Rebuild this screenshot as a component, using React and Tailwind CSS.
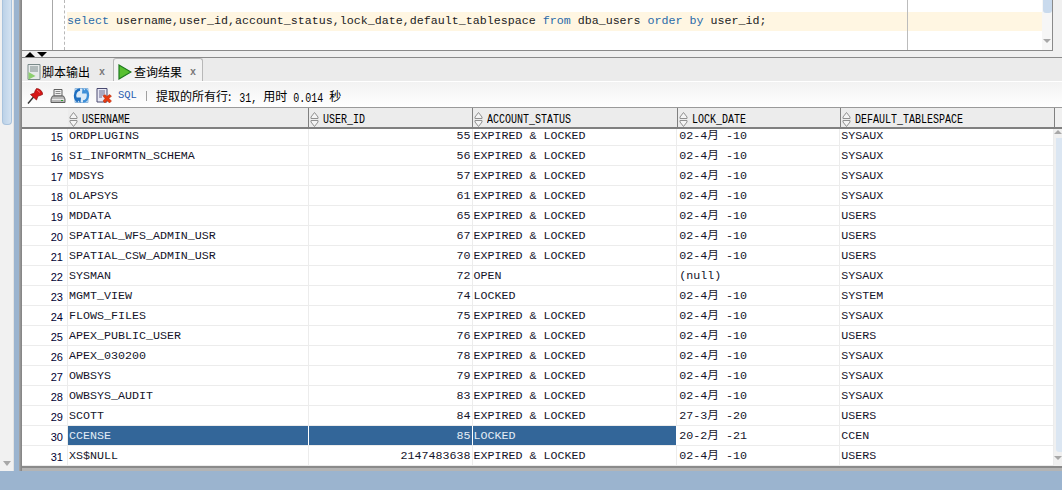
const EL = 'EXPIRED & LOCKED';

const rows = [
  [15, 'ORDPLUGINS', '55', EL, '02-4月 -10', 'SYSAUX'],
  [16, 'SI_INFORMTN_SCHEMA', '56', EL, '02-4月 -10', 'SYSAUX'],
  [17, 'MDSYS', '57', EL, '02-4月 -10', 'SYSAUX'],
  [18, 'OLAPSYS', '61', EL, '02-4月 -10', 'SYSAUX'],
  [19, 'MDDATA', '65', EL, '02-4月 -10', 'USERS'],
  [20, 'SPATIAL_WFS_ADMIN_USR', '67', EL, '02-4月 -10', 'USERS'],
  [21, 'SPATIAL_CSW_ADMIN_USR', '70', EL, '02-4月 -10', 'USERS'],
  [22, 'SYSMAN', '72', 'OPEN', '(null)', 'SYSAUX'],
  [23, 'MGMT_VIEW', '74', 'LOCKED', '02-4月 -10', 'SYSTEM'],
  [24, 'FLOWS_FILES', '75', EL, '02-4月 -10', 'SYSAUX'],
  [25, 'APEX_PUBLIC_USER', '76', EL, '02-4月 -10', 'USERS'],
  [26, 'APEX_030200', '78', EL, '02-4月 -10', 'SYSAUX'],
  [27, 'OWBSYS', '79', EL, '02-4月 -10', 'SYSAUX'],
  [28, 'OWBSYS_AUDIT', '83', EL, '02-4月 -10', 'SYSAUX'],
  [29, 'SCOTT', '84', EL, '27-3月 -20', 'USERS'],
  [30, 'CCENSE', '85', 'LOCKED', '20-2月 -21', 'CCEN'],
  [31, 'XS$NULL', '2147483638', EL, '02-4月 -10', 'USERS'],
];

const mono = "font-['Liberation_Mono','Noto_Sans_CJK_SC',monospace]";
const cjk = "font-['Noto_Sans_CJK_SC','Liberation_Sans',sans-serif]";

const SortIcon = () => (
  <svg width="9" height="15" viewBox="0 0 9 15" className="shrink-0">
    <path d="M4.5 0.5 L8 5 V6.5 H1 V5 Z M4.5 14.5 L8 10 V8.5 H1 V10 Z" fill="#f4f4f4" stroke="#909090" />
  </svg>
);

const PinIcon = () => (
  <svg width="16" height="16" viewBox="0 0 16 16">
    <path d="M1 15.5 L6.5 9" stroke="#333" strokeWidth="1.4" />
    <path d="M9.5 0.5 Q12 0.5 14 2.5 Q15.8 4.5 15.5 6.5 L13 7.5 L11 8 L9.5 12 L3.5 6.5 L7.5 5 L8 3 Z" fill="#d81818" stroke="#8c0c0c" strokeWidth="0.7" />
    <path d="M10 2 L13 4.5" stroke="#f07070" strokeWidth="1" />
  </svg>
);

const PrinterIcon = () => (
  <svg width="16" height="16" viewBox="0 0 16 16">
    <path d="M4 1.5 H12 V8 H4 Z" fill="#f0f0f0" stroke="#606060" />
    <path d="M5.5 3.5 H10.5 M5.5 5.5 H10.5" stroke="#8a8a8a" />
    <path d="M2.5 8 H13.5 L15 11 V14.5 H1 V11 Z" fill="#b8b8b8" stroke="#606060" />
    <path d="M2 11.5 H14" stroke="#e8e8e8" />
    <rect x="11" y="12" width="2" height="1" fill="#28a028" />
  </svg>
);

const RefreshIcon = () => (
  <svg width="17" height="17" viewBox="0 0 17 17">
    <path d="M2 1.5 H15 V15.5 H2 Z" fill="#dcebf8" stroke="#8fb8de" />
    <path d="M7 2.5 Q2.5 3 2 8.5 Q2 12.5 5 14.5" fill="none" stroke="#1f6fc0" strokeWidth="2.4" />
    <path d="M2.5 10.5 L8 10.5 L7.5 16 Z" fill="#1f6fc0" />
    <path d="M10 14.5 Q14.5 14 15 8.5 Q15 4.5 12 2.5" fill="none" stroke="#3d8fd8" strokeWidth="2.4" />
    <path d="M14.5 6.5 L9 6.5 L9.5 1 Z" fill="#3d8fd8" />
  </svg>
);

const ClearIcon = () => (
  <svg width="16" height="16" viewBox="0 0 16 16">
    <path d="M1 0.5 H11 V14 H1 Z" fill="#e8e8f4" stroke="#4a4a70" />
    <path d="M3 3 H9 M3 5 H9 M3 7 H8 M3 9 H6" stroke="#6a6a90" />
    <path d="M7 8 L9 6.5 L11 8.5 L13.5 6.5 L15.5 8 L13 10.5 L15.5 13 L13.5 15 L11 12.5 L9 15 L7 13 L9 10.5 Z" fill="#e83a10" stroke="#b02808" strokeWidth="0.5" />
  </svg>
);

const PlayIcon = () => (
  <svg width="14" height="16" viewBox="0 0 14 16">
    <path d="M1 1 L13 8 L1 15 Z" fill="#58c030" stroke="#1e7a1e" strokeWidth="1.2" />
  </svg>
);

const ScriptIcon = () => (
  <svg width="14" height="16" viewBox="0 0 14 16">
    <path d="M1 0.5 H13 V15.5 H1 Z" fill="#e6eaea" stroke="#7a8a8a" />
    <path d="M3 3 H11 M3 5 H11 M3 7 H11" stroke="#7a8a8a" />
    <path d="M1.5 8 L8.5 12 L1.5 15.5 Z" fill="#8ccf70" />
  </svg>
);

const Cell = ({ className = '', children }) => (
  <div className={`h-full flex items-center pt-[2px] overflow-hidden whitespace-pre border-r ${className}`}>{children}</div>
);

const HeaderCell = ({ label, className = '' }) => (
  <div className={`flex items-center gap-[4px] pl-[1px] pt-[4px] border-r border-[#808080] ${className}`}>
    <SortIcon />
    <span className={`${mono} inline-block scale-y-[1.2] text-[10px] text-black`}>{label}</span>
  </div>
);

const Row = ({ row }) => {
  const [num, user, id, status, date, space] = row;
  const selected = num === 30;
  const sel = selected ? 'bg-[#336699] text-[#e4edf6] border-white' : 'border-[#ececec]';
  return (
    <div className={`${mono} flex h-[20px] text-[11.67px] leading-none text-[#14142a] border-b border-[#ececec]`}>
      <div className="w-[46px] h-full flex items-center justify-end pr-[4px] pt-[3px] border-r border-[#ececec] font-['Liberation_Sans',sans-serif] text-[11px] text-[#000033]">{num}</div>
      <Cell className={`w-[241px] pl-[1px] ${sel}`}>{user}</Cell>
      <Cell className={`w-[164px] justify-end pr-[1px] ${sel}`}>{id}</Cell>
      <Cell className={`w-[205px] pl-[1px] ${sel}`}>{status}</Cell>
      <Cell className="w-[163px] pl-[2px] border-[#ececec]">{date}</Cell>
      <Cell className="w-[214px] pl-[1px] border-[#ececec]">{space}</Cell>
    </div>
  );
};

const App = () => {
  return (
    <div className="w-[1062px] h-[490px] overflow-hidden flex flex-col bg-[#9bb4cf]">
      <div className="flex h-[471px]">
        {/* outer scroll bar */}
        <div className="w-[14px] bg-[#f1f1f1] flex flex-col justify-between items-center border-r border-[#e2e2e2]">
          <div className="w-[10px] h-[125px] rounded-b-[4px] bg-gradient-to-r from-[#bcd2e8] to-[#d3e2f1] border border-t-0 border-[#a9c3dd]" />
          <div className="mb-[5px] w-0 h-0 border-x-[4px] border-x-transparent border-t-[5px] border-t-[#a8a8a8]" />
        </div>
        <div className="w-[5px]" />
        <div className="w-[3px] bg-gradient-to-r from-[#a8a8a8] to-[#808080]" />

        <div className="flex-1 min-w-0 flex flex-col bg-[#f0f0f0] border-b-[3px] border-[#b4b4b4]">
          {/* editor */}
          <div className="h-[51px] shrink-0 flex">
            <div className="relative w-[1031px] flex bg-white border-b-[1px] border-[#8a8a8a] border-r border-r-[#8a8a8a]">
              <div className="w-[31px] shrink-0 border-r border-[#a8a8a8]" />
              <div className="w-[12px] shrink-0 border-r border-dashed border-[#b8b8b8]" />
              <div className="flex-1 min-w-0 pt-[12px] pl-[2px] flex">
                <div className={`${mono} w-[975px] h-[19px] shrink-0 flex items-center pt-[1px] bg-[#fff6e2] text-[11.67px] whitespace-pre text-[#222]`}>
                  <span className="text-[#2a6aa8]">select</span>
                  {' username,user_id,account_status,lock_date,default_tablespace '}
                  <span className="text-[#2a6aa8]">from</span>
                  {' dba_users '}
                  <span className="text-[#2a6aa8]">order by</span>
                  {' user_id;'}
                </div>
                <div className="w-[10px] shrink-0 flex flex-col items-center justify-between pb-[7px] -mt-[12px] bg-[#f6f6f6]">
                  <div className="w-[9px] h-[13px] rounded-b-[3px] bg-[#c9daed]" />
                  <div className="w-0 h-0 border-x-[4px] border-x-transparent border-t-[4px] border-t-[#a8a8a8]" />
                </div>
              </div>
              {/* print margin over the text line */}
              <div className="absolute left-[885px] top-0 bottom-0 w-px bg-[#bcbcbc]" />
            </div>
            <div className="flex-1 border-b border-[#f0f0f0]" />
          </div>

          {/* splitter */}
          <div className="h-[7px] shrink-0 flex items-center gap-[2px] pl-[3px] bg-[#f0f0f0] border-b border-[#8a8a8a]">
            <div className="w-0 h-0 border-x-[5px] border-x-transparent border-b-[5px] border-b-black" />
            <div className="w-0 h-0 border-x-[5px] border-x-transparent border-t-[5px] border-t-black" />
          </div>

          {/* tabs */}
          <div className={`${cjk} h-[24px] shrink-0 flex items-end pl-[2px] bg-[#ebebeb] border-b border-white text-[12px] text-black`}>
            <div className="w-[89px] h-[22px] flex items-center pl-[3px] pt-[4px]">
              <ScriptIcon />
              <span className="ml-[1px]">脚本输出</span>
              <span className={`${mono} ml-[9px] text-[10px] font-bold text-[#777]`}>x</span>
            </div>
            <div className="w-[90px] h-[23px] flex items-center pl-[4px] pt-[4px] rounded-t-[3px] border border-b-0 border-[#b8b8b8] bg-[#f2f2f2]">
              <PlayIcon />
              <span className="ml-[2px]">查询结果</span>
              <span className={`${mono} ml-[8px] text-[10px] font-bold text-[#777]`}>x</span>
            </div>
          </div>

          {/* toolbar */}
          <div className="h-[26px] shrink-0 flex items-center pl-[5px] pt-[2px] bg-gradient-to-b from-[#f2f2f2] to-white border-b border-[#9a9a9a]">
            <PinIcon />
            <div className="ml-[7px]"><PrinterIcon /></div>
            <div className="ml-[7px]"><RefreshIcon /></div>
            <div className="ml-[6px]"><ClearIcon /></div>
            <span className={`${mono} ml-[6px] pt-[1px] text-[10.5px] text-[#2a5cb0]`}>SQL</span>
            <div className="ml-[9px] w-px h-[10px] bg-[#a0a0a0]" />
            <div className={`${cjk} ml-[9px] pt-[1px] text-[12px] text-black whitespace-pre`}>
              提取的所有行:<span className={`${mono} inline-block scale-y-[1.2] ml-[2px] text-[10px]`}> 31, </span>用时<span className={`${mono} inline-block scale-y-[1.2] text-[10px]`}> 0.014 </span>秒
            </div>
          </div>

          {/* result grid */}
          <div className="flex-1 min-h-0 flex flex-col bg-white border-b-[2px] border-[#8a8a8a]">
            <div className="h-[21px] shrink-0 flex bg-[#ececec] border-b-[2px] border-[#808080]">
              <div className="w-[46px] bg-[#f0f0f0]" />
              <HeaderCell label="USERNAME" className="w-[241px]" />
              <HeaderCell label="USER_ID" className="w-[164px]" />
              <HeaderCell label="ACCOUNT_STATUS" className="w-[205px]" />
              <HeaderCell label="LOCK_DATE" className="w-[163px]" />
              <HeaderCell label="DEFAULT_TABLESPACE" className="w-[214px]" />
              <div className="flex-1 bg-[#f0f0f0]" />
            </div>
            <div className="flex-1 min-h-0 flex">
              <div className="w-[1033px] overflow-hidden">
                <div className="-mt-[3px]">
                  {rows.map((row) => (
                    <Row key={row[0]} row={row} />
                  ))}
                </div>
              </div>
              <div className="flex-1 flex flex-col items-end justify-between pt-[1px] pb-[6px] bg-[#f0f0f0]">
                <div className="w-0 h-0 border-x-[4px] border-x-transparent border-b-[4px] border-b-[#a8a8a8]" />
                <div className="w-[6px] h-[314px] rounded-bl-[3px] bg-[#dbe6f2]" />
                <div className="w-0 h-0 border-x-[4px] border-x-transparent border-t-[4px] border-t-[#a8a8a8]" />
              </div>
            </div>
          </div>
        </div>
      </div>
    </div>
  );
};

export default App;
